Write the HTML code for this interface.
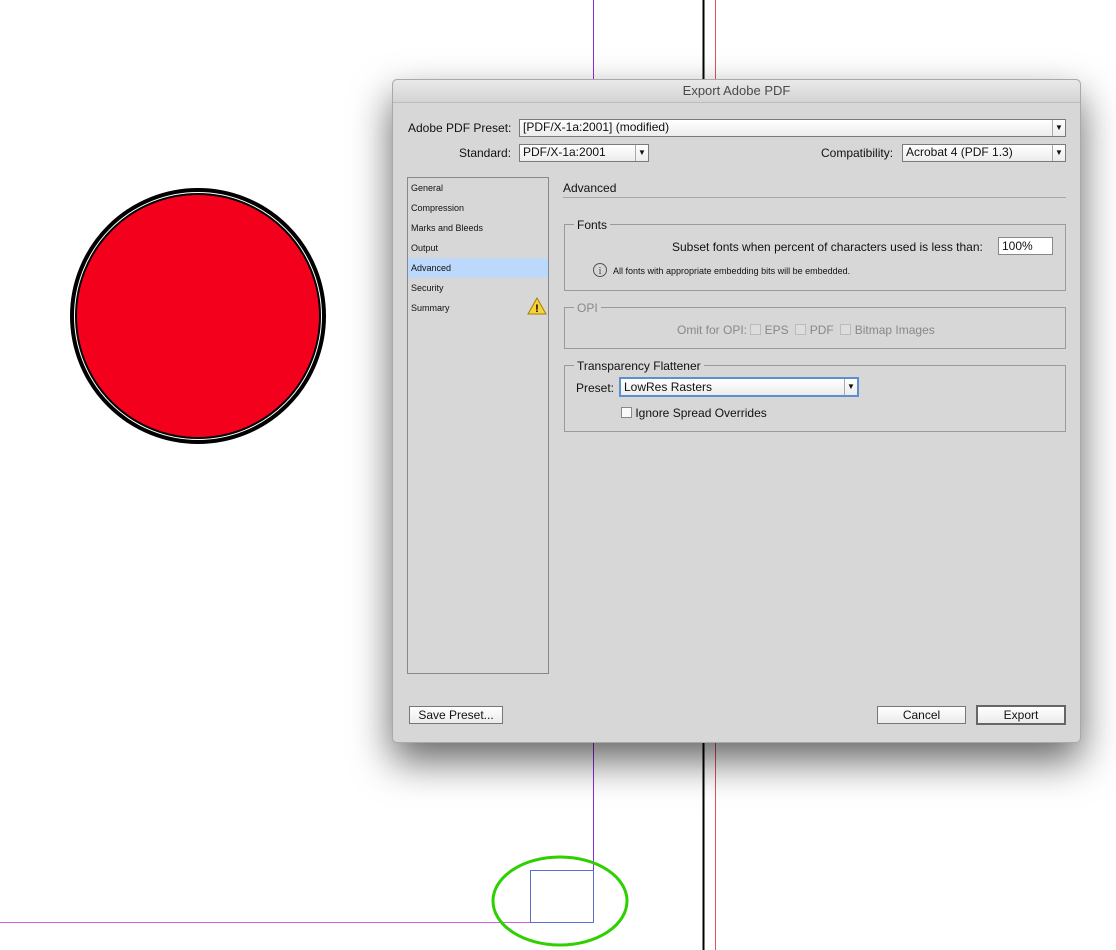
<!DOCTYPE html>
<html><head><style>
body{margin:0;width:1116px;height:950px;background:#fff;position:relative;overflow:hidden;font-family:"Liberation Sans",Arial,sans-serif;color:#111}
.a{position:absolute}
.dlg{left:392px;top:79px;width:689px;height:664px;background:#d7d7d7;border-radius:5px;box-shadow:0 18px 40px rgba(0,0,0,.6);border:1px solid #a9a9a9;box-sizing:border-box}
.title{left:0;top:0;width:100%;height:22px;text-align:center;font-size:13px;line-height:22px;color:#4a4a4a;border-bottom:1px solid #bcbcbc;background:linear-gradient(#e9e9e9,#d4d4d4);border-radius:5px 5px 0 0}
.lbl{font-size:12px;white-space:nowrap}
.sel{background:linear-gradient(#fff,#ececec);border:1px solid #7a7a7a;box-sizing:border-box;font-size:12px;line-height:15px;padding-left:3px;white-space:nowrap}
.sel .ar{position:absolute;right:0;top:0;width:12px;height:100%;border-left:1px solid #aaa;font-size:8px;text-align:center;line-height:15px}
.list{left:14px;top:97px;width:142px;height:497px;border:1px solid #888;box-sizing:border-box;background:#d7d7d7}
.list div{font-size:9px;height:20px;line-height:20px;padding-left:3px}
.grp{border:1px solid #9a9a9a;box-sizing:border-box}
.leg{background:#d7d7d7;padding:0 3px;font-size:12px}
.cb{width:11px;height:11px;border:1px solid #888;background:#fafafa;box-sizing:border-box;display:inline-block;vertical-align:-1px}
.btn{background:linear-gradient(#fff,#ebebeb);border:1px solid #777;box-sizing:border-box;font-size:12px;text-align:center;line-height:16px}
</style></head><body>
<svg class="a" style="left:0;top:0" width="1116" height="950">
<line x1="593.5" y1="0" x2="593.5" y2="922" stroke="#8a2be2" stroke-width="1"/>
<line x1="703.5" y1="0" x2="703.5" y2="950" stroke="#000" stroke-width="2"/>
<line x1="715.5" y1="0" x2="715.5" y2="950" stroke="#e25060" stroke-width="1"/>
<line x1="0" y1="922.5" x2="593" y2="922.5" stroke="#d060e0" stroke-width="1"/>
<rect x="530.5" y="870.5" width="63" height="52" fill="none" stroke="#5a6fcf" stroke-width="1"/>
<ellipse cx="560" cy="901" rx="67" ry="44" fill="none" stroke="#2ed000" stroke-width="3"/>
<circle cx="198" cy="316" r="126" fill="#fff" stroke="#000" stroke-width="4"/>
<circle cx="198" cy="316" r="122" fill="#f2001c" stroke="#000" stroke-width="2"/>
</svg>
<div class="a dlg">
 <div class="a title">Export Adobe PDF</div>
 <div class="a lbl" style="left:15px;top:41px">Adobe PDF Preset:</div>
 <div class="a sel" style="left:126px;top:39px;width:547px;height:18px">[PDF/X-1a:2001] (modified)<span class="ar">▼</span></div>
 <div class="a lbl" style="left:66px;top:66px">Standard:</div>
 <div class="a sel" style="left:126px;top:64px;width:130px;height:18px">PDF/X-1a:2001<span class="ar">▼</span></div>
 <div class="a lbl" style="left:428px;top:66px">Compatibility:</div>
 <div class="a sel" style="left:509px;top:64px;width:164px;height:18px">Acrobat 4 (PDF 1.3)<span class="ar">▼</span></div>
 <div class="a list">
  <div>General</div><div>Compression</div><div>Marks and Bleeds</div><div>Output</div>
  <div style="background:#bcd8fb">Advanced</div><div>Security</div><div>Summary</div>
 </div>
 <svg class="a" style="left:134px;top:217px" width="20" height="18"><path d="M10 1 L19 17 L1 17Z" fill="#f7d23a" stroke="#a08000" stroke-width="1"/><text x="10" y="15" font-size="11" font-weight="bold" text-anchor="middle" font-family="Liberation Sans">!</text></svg>
 <div class="a lbl" style="left:170px;top:101px">Advanced</div>
 <div class="a" style="left:170px;top:117px;width:503px;height:1px;background:#a8a8a8"></div>
 <div class="a grp" style="left:171px;top:144px;width:502px;height:67px"></div>
 <div class="a leg" style="left:181px;top:138px">Fonts</div>
 <div class="a lbl" style="left:279px;top:160px">Subset fonts when percent of characters used is less than:</div>
 <div class="a" style="left:605px;top:157px;width:55px;height:18px;background:#fff;border:1px solid #888;box-sizing:border-box;font-size:12px;line-height:16px;padding-left:3px">100%</div>
 <svg class="a" style="left:199px;top:182px" width="16" height="16"><circle cx="8" cy="8" r="6.5" fill="none" stroke="#555"/><text x="8" y="12" font-size="10" text-anchor="middle" fill="#444" font-family="Liberation Serif">i</text></svg>
 <div class="a" style="left:220px;top:186px;font-size:9px">All fonts with appropriate embedding bits will be embedded.</div>
 <div class="a grp" style="left:171px;top:227px;width:502px;height:42px"></div>
 <div class="a leg" style="left:181px;top:221px;color:#888">OPI</div>
 <div class="a lbl" style="left:284px;top:243px;color:#888">Omit for OPI: <span class="cb" style="border-color:#bbb;background:#ddd"></span> EPS&nbsp; <span class="cb" style="border-color:#bbb;background:#ddd"></span> PDF&nbsp; <span class="cb" style="border-color:#bbb;background:#ddd"></span> Bitmap Images</div>
 <div class="a grp" style="left:171px;top:285px;width:502px;height:67px"></div>
 <div class="a leg" style="left:181px;top:279px">Transparency Flattener</div>
 <div class="a lbl" style="left:183px;top:301px">Preset:</div>
 <div class="a sel" style="left:226px;top:297px;width:240px;height:20px;border:2px solid #5b8fd0;line-height:16px">LowRes Rasters<span class="ar" style="line-height:16px">▼</span></div>
 <div class="a lbl" style="left:228px;top:326px"><span class="cb"></span> Ignore Spread Overrides</div>
 <div class="a btn" style="left:16px;top:626px;width:94px;height:18px">Save Preset...</div>
 <div class="a btn" style="left:484px;top:626px;width:89px;height:18px">Cancel</div>
 <div class="a btn" style="left:583px;top:625px;width:90px;height:20px;border:2px solid #666">Export</div>
</div>
</body></html>
